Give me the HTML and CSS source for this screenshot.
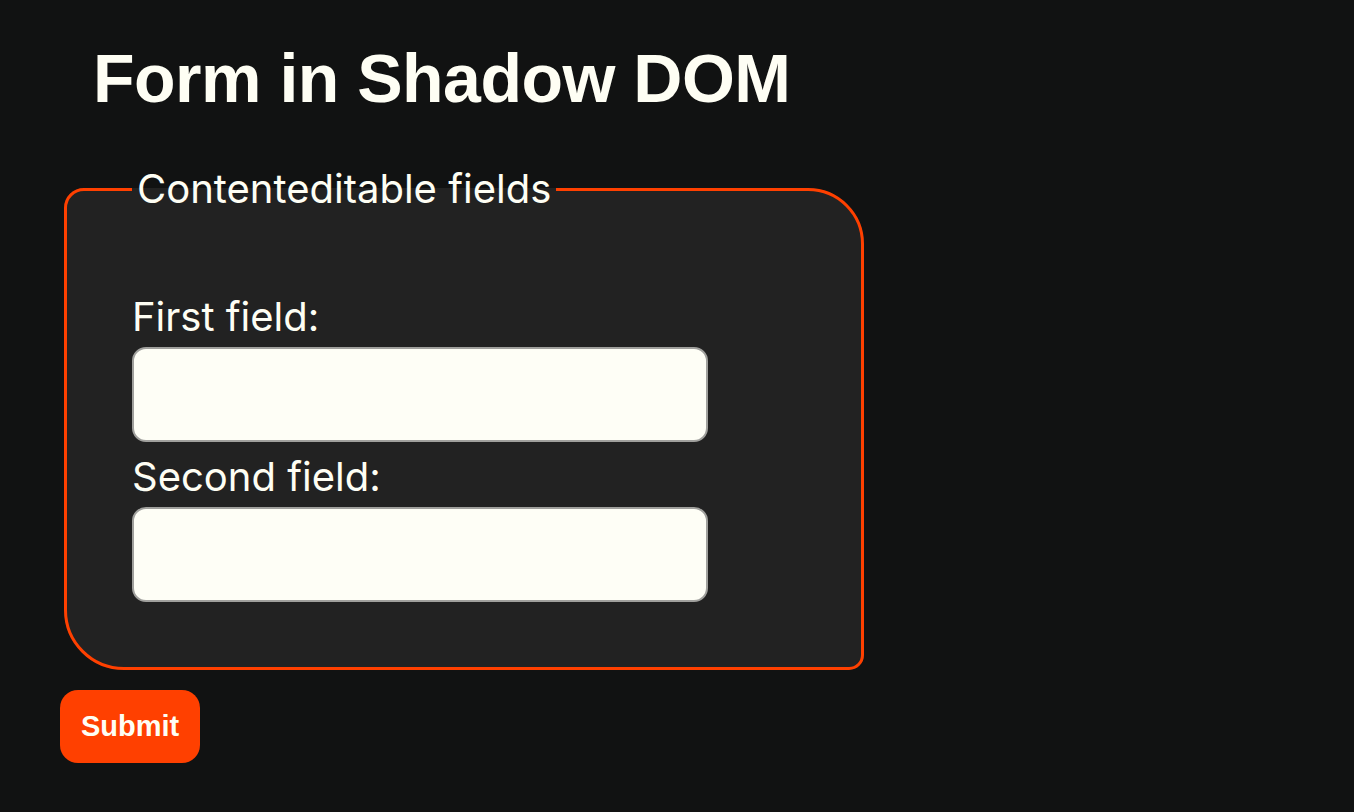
FILE: index.html
```html
<!DOCTYPE html>
<html lang="en">
<head>
<meta charset="utf-8">
<title>Form in Shadow DOM</title>
<link rel="stylesheet" href="styles.css">
</head>
<body>
<main class="page">
  <h1 class="title">Form in Shadow DOM</h1>
  <form class="form">
    <fieldset class="group">
      <legend class="group-legend">Contenteditable fields</legend>
      <label class="field-label" for="f1">First field:</label>
      <div class="field" id="f1" contenteditable="true"></div>
      <label class="field-label field-label-next" for="f2">Second field:</label>
      <div class="field" id="f2" contenteditable="true"></div>
    </fieldset>
    <button class="submit" type="submit">Submit</button>
  </form>
</main>
</body>
</html>
```

FILE: styles.css
```css
html, body {
  margin: 0;
  padding: 0;
  background: #111212;
  color: #fefef4;
}

body {
  font-family: "Inter", "Liberation Sans", sans-serif;
}

.page {
  padding: 44px 60px 0 60px;
}

.title {
  font-family: "Liberation Sans", Arial, sans-serif;
  font-weight: 700;
  font-size: 68px;
  line-height: 68px;
  letter-spacing: -0.5px;
  margin: 0 0 0 33px;
  color: #fefef4;
}

.form {
  display: flex;
  flex-direction: column;
  align-items: flex-start;
  margin-top: 53px;
}

.group {
  box-sizing: border-box;
  width: 800px;
  margin: 0 0 0 4px;
  padding: 80px 65px 65px 65px;
  border: 3px solid #ff4000;
  border-radius: 20px 56px 15px 60px;
  background: #222222;
  display: flex;
  flex-direction: column;
  align-items: flex-start;
}

.group-legend {
  font-size: 40px;
  line-height: 48px;
  padding: 0 5px;
  color: #fefef4;
}

.field-label {
  display: block;
  font-size: 40px;
  line-height: 48px;
  color: #fefef4;
  margin: 0 0 6px 0;
}

.field-label-next {
  margin-top: 11px;
}

.field {
  box-sizing: border-box;
  width: 576px;
  height: 95px;
  background: #fefef6;
  border: 2px solid #a0a09d;
  border-radius: 14px;
  outline: none;
}

.submit {
  margin-top: 20px;
  font-family: "Liberation Sans", Arial, sans-serif;
  font-weight: 700;
  font-size: 29px;
  line-height: 33px;
  padding: 20px 21px;
  border: none;
  border-radius: 18px;
  background: #ff4000;
  color: #fefef4;
  cursor: pointer;
}
```
